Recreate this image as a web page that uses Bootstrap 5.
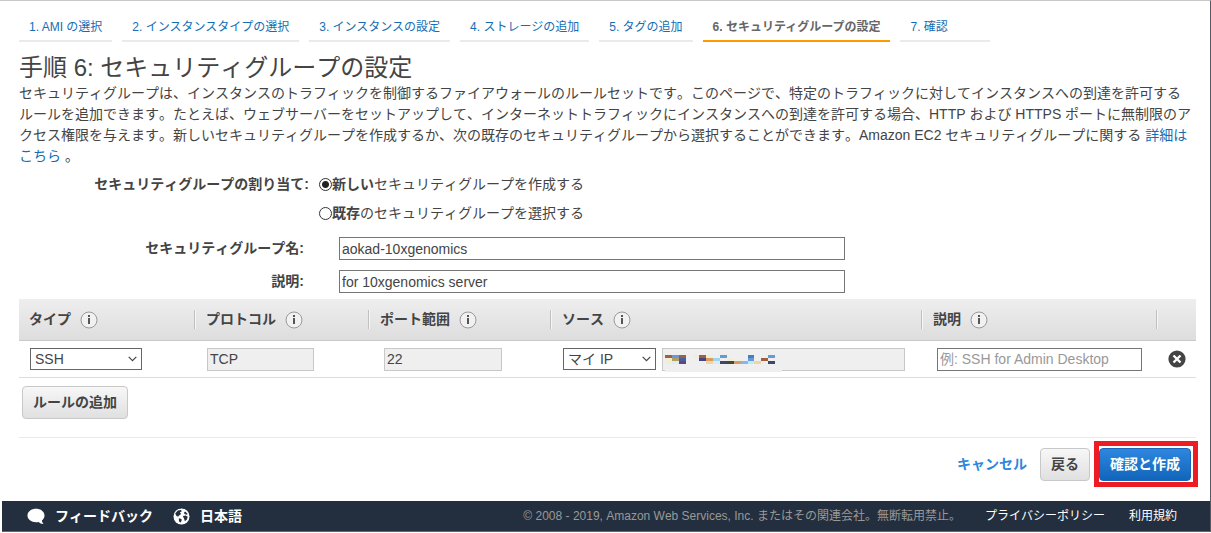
<!DOCTYPE html>
<html lang="ja">
<head>
<meta charset="utf-8">
<meta name="viewport" content="width=device-width, initial-scale=1">
<title>手順 6: セキュリティグループの設定</title>
<link href="https://cdn.jsdelivr.net/npm/bootstrap@5.3.0/dist/css/bootstrap.min.css" rel="stylesheet">
<style>
  body { font-family: "Liberation Sans", "Noto Sans CJK JP", sans-serif; font-size: 14px; line-height: 21px; font-kerning: none; color: #444; background: #fff; }
  a { color: #146eb4; text-decoration: none; }
  .console { border-top: 1px solid #c8c8c8; border-right: 1px solid #545b64; padding-left: 2px; }
  .console-main { padding: 17px 14px 20px 17px; }
  .wizard { gap: 10px; font-size: 12px; line-height: 18px; font-kerning: normal; }
  .wizard a { display: block; min-width: 90px; padding: 0 10px 4px; border-bottom: 2px solid #eaeaea; white-space: nowrap; }
  .wizard a.active { color: #666; font-weight: 700; border-color: #f90; }
  h1 { font-size: 24px; line-height: 28px; font-weight: 400; margin: 12px 0 1px; }
  .intro { margin: 0 4px 7px 0; line-break: strict; }
  .form-label-col { width: 290px; text-align: right; font-weight: 700; flex: none; }
  .form-label-col.inset { width: 285px; margin-right: 35px; }
  .assign { gap: 10px; }
  .assign-options { display: grid; gap: 8px; }
  .assign input { appearance: none; width: 13px; height: 13px; margin: 0; border: 1px solid #333; border-radius: 50%; background: #fff; flex: none; }
  .assign input:checked { background: radial-gradient(circle, #222 0 3px, #fff 4px); }
  .group-fields { gap: 10px; margin-top: 13px; }
  .field { height: 23px; padding: 0 2px; border: 1px solid #767676; background: #fff; color: #444; font-size: 14px; line-height: 21px; border-radius: 0; min-width: 0; }
  .field:disabled { background: #efefef; border-color: #c8c8c8; }
  .field::placeholder { color: #999; opacity: 1; }
  .field-wide { width: 506px; max-width: 100%; }
  .pick { appearance: none; height: 22px; padding: 0 20px 0 4px; border: 1px solid #666; border-radius: 0; color: #444; font-size: 14px; line-height: 20px;
    background: #fff url("data:image/svg+xml,%3Csvg xmlns='http://www.w3.org/2000/svg' width='9' height='6'%3E%3Cpath d='M.7.8 4.5 4.6 8.3.8' fill='none' stroke='%23444' stroke-width='1.2'/%3E%3C/svg%3E") no-repeat right 4px center; }
  .rules { table-layout: fixed; width: 100%; margin: 6px 0 8px; border-collapse: separate; border-spacing: 0; }
  .rules thead { background: linear-gradient(#eee, #ddd); }
  .rules th { height: 42px; padding: 0; border-bottom: 1px solid #c8c8c8; }
  .rules th > div { height: 19px; padding-left: 11px; border-left: 1px solid #c0c0c0; box-shadow: inset 1px 0 #f6f6f6; gap: 9px; }
  .rules th:first-child > div { padding-left: 10px; border-left: 0; box-shadow: none; }
  .rules td { height: 37px; padding: 0 0 0 13px; border-bottom: 1px solid #ddd; }
  .rules td:first-child { padding-left: 11px; }
  .rules td:last-child { padding-left: 12px; }
  .col-type { width: 175px; } .col-proto { width: 174px; } .col-port { width: 182px; } .col-desc { width: 235px; } .col-del { width: 40px; }
  .w-type { width: 112px; } .w-proto { width: 107px; } .w-port { width: 118px; } .w-source { width: 93px; } .w-desc { width: 205px; }
  .source-pair { gap: 6px; padding-right: 16px; }
  .indent { margin-left: 3px; }
  .mosaic { left: 3px; top: 1px; }
  .info { flex: none; }
  .ctl { height: 33px; padding: 0 10px; border: 1px solid #c8c8c8; border-radius: 4px; background: linear-gradient(#f7f7f7, #e0e0e0); color: #444; font-size: 14px; line-height: 31px; font-weight: 700; }
  .ctl-primary { border-color: #1a66b8; background: linear-gradient(#2e86de, #1166bb); color: #fff; }
  .actions { border-top: 1px solid #eaeaea; margin-top: 18px; padding: 10px 5px 0 0; }
  .actions a { color: #2e86de; font-weight: 700; margin-right: 13px; }
  .highlight { margin-left: 9px; }
  .highlight::after { content: ""; position: absolute; inset: -7px -7px -6px -5px; border: 5px solid #ed1c24; pointer-events: none; }
  .console-footer { min-height: 31px; padding: 0 33px 0 25px; background: #232f3e; border-bottom: 1px solid #666; color: #999; font-size: 12px; line-height: 18px; }
  .console-footer a { color: #fff; }
  .console-footer .tool { font-size: 14px; font-weight: 700; gap: 10px; }
</style>
</head>
<body>
<div class="console">
  <main class="console-main">
    <nav class="wizard d-flex flex-wrap" aria-label="ウィザード">
      <a href="#">1. AMI の選択</a>
      <a href="#">2. インスタンスタイプの選択</a>
      <a href="#">3. インスタンスの設定</a>
      <a href="#">4. ストレージの追加</a>
      <a href="#">5. タグの追加</a>
      <a href="#" class="active" aria-current="step">6. セキュリティグループの設定</a>
      <a href="#">7. 確認</a>
    </nav>
    <h1>手順 6: セキュリティグループの設定</h1>
    <p class="intro">セキュリティグループは、インスタンスのトラフィックを制御するファイアウォールのルールセットです。このページで、特定のトラフィックに対してインスタンスへの到達を許可するルールを追加できます。たとえば、ウェブサーバーをセットアップして、インターネットトラフィックにインスタンスへの到達を許可する場合、HTTP および HTTPS ポートに無制限のアクセス権限を与えます。新しいセキュリティグループを作成するか、次の既存のセキュリティグループから選択することができます。Amazon EC2 セキュリティグループに関する <a href="#">詳細はこちら</a> 。</p>

    <div class="assign d-flex" role="radiogroup" aria-labelledby="assign-label">
      <div class="form-label-col" id="assign-label">セキュリティグループの割り当て:</div>
      <div class="assign-options">
        <div class="d-flex align-items-center"><input type="radio" name="assign" id="assign-new" checked><label for="assign-new"><b>新しい</b>セキュリティグループを作成する</label></div>
        <div class="d-flex align-items-center"><input type="radio" name="assign" id="assign-old"><label for="assign-old"><b>既存</b>のセキュリティグループを選択する</label></div>
      </div>
    </div>
    <div class="group-fields d-grid">
      <div class="d-flex align-items-center">
        <label class="form-label-col inset" for="sg-name">セキュリティグループ名:</label>
        <input class="field field-wide" id="sg-name" type="text" value="aokad-10xgenomics">
      </div>
      <div class="d-flex align-items-center">
        <label class="form-label-col inset" for="sg-desc">説明:</label>
        <input class="field field-wide" id="sg-desc" type="text" value="for 10xgenomics server">
      </div>
    </div>

    <table class="rules">
      <colgroup><col class="col-type"><col class="col-proto"><col class="col-port"><col><col class="col-desc"><col class="col-del"></colgroup>
      <thead>
        <tr>
          <th scope="col"><div class="d-flex align-items-center">タイプ <svg class="info" width="18" height="18" viewBox="0 0 18 18"><use href="#i-info"/></svg></div></th>
          <th scope="col"><div class="d-flex align-items-center">プロトコル <svg class="info" width="18" height="18" viewBox="0 0 18 18"><use href="#i-info"/></svg></div></th>
          <th scope="col"><div class="d-flex align-items-center">ポート範囲 <svg class="info" width="18" height="18" viewBox="0 0 18 18"><use href="#i-info"/></svg></div></th>
          <th scope="col"><div class="d-flex align-items-center">ソース <svg class="info" width="18" height="18" viewBox="0 0 18 18"><use href="#i-info"/></svg></div></th>
          <th scope="col"><div class="d-flex align-items-center">説明 <svg class="info" width="18" height="18" viewBox="0 0 18 18"><use href="#i-info"/></svg></div></th>
          <th><div></div></th>
        </tr>
      </thead>
      <tbody>
        <tr>
          <td><select class="pick w-type" aria-label="タイプ"><option>SSH</option></select></td>
          <td><input class="field w-proto" type="text" value="TCP" disabled aria-label="プロトコル"></td>
          <td><input class="field w-port indent" type="text" value="22" disabled aria-label="ポート範囲"></td>
          <td>
            <div class="source-pair d-flex">
              <select class="pick w-source" aria-label="ソース"><option>マイ IP</option></select>
              <div class="position-relative d-flex flex-grow-1">
                <input class="field flex-grow-1" type="text" disabled aria-label="IP アドレス">
                <svg class="mosaic position-absolute" width="117" height="23" viewBox="0 0 117 23" shape-rendering="crispEdges" aria-hidden="true">
                  <path fill="#efefef" d="M0 0h117v23H0z"/>
                  <path fill="#a06040" d="M0 6h7v3H0zM14 6h7v3h-7zM34 6h7v3h-7zM96 9h7v3h-7z"/>
                  <path fill="#629bd8" d="M7 6h7v3H7zM55 6h7v3h-7zM103 6h7v3h-7zM83 9h6v3h-6z"/>
                  <path fill="#4280be" d="M83 6h6v3h-6z"/>
                  <path fill="#f0efd2" d="M0 9h7v6H0zM28 6h6v3h-6zM41 6h7v3h-7zM62 9h7v3h-7z"/>
                  <path fill="#b89c60" d="M7 9h7v3H7z"/>
                  <path fill="#4260a4" d="M14 9h7v3h-7z"/>
                  <path fill="#d7eff4" d="M7 12h7v3H7zM48 12h7v3h-7z"/>
                  <path fill="#644284" d="M14 12h7v3h-7z"/>
                  <path fill="#464284" d="M34 9h7v3h-7z"/>
                  <path fill="#d89c62" d="M41 9h7v3h-7zM69 12h7v3h-7z"/>
                  <path fill="#9cd4f4" d="M48 9h7v3h-7z"/>
                  <path fill="#f2d49c" d="M41 12h7v3h-7zM89 12h7v3h-7z"/>
                  <path fill="#424664" d="M55 12h7v3h-7zM103 12h7v3h-7z"/>
                  <path fill="#444642" d="M62 12h7v3h-7z"/>
                  <path fill="#82baf0" d="M76 12h7v3h-7z"/>
                  <path fill="#b8eff4" d="M83 12h6v3h-6z"/>
                </svg>
              </div>
            </div>
          </td>
          <td><input class="field w-desc indent" type="text" placeholder="例: SSH for Admin Desktop" aria-label="説明"></td>
          <td><button type="button" class="btn p-0 border-0 d-block" aria-label="ルールの削除"><svg class="d-block" width="18" height="18" viewBox="0 0 18 18"><circle cx="9" cy="9" r="8.6" fill="#444"/><path d="m5.5 5.5 7 7m0-7-7 7" stroke="#fff" stroke-width="2.4"/></svg></button></td>
        </tr>
      </tbody>
    </table>
    <button type="button" class="ctl indent d-block">ルールの追加</button>

    <div class="actions d-flex justify-content-end align-items-center">
      <a href="#">キャンセル</a>
      <button type="button" class="ctl">戻る</button>
      <div class="highlight position-relative d-flex"><button type="button" class="ctl ctl-primary">確認と作成</button></div>
    </div>
  </main>

  <footer class="console-footer d-flex align-items-center">
    <a href="#" class="tool d-flex align-items-center"><svg width="18" height="17" viewBox="0 0 18 17"><path fill="#fff" d="M9 .8c4.8 0 8.5 2.9 8.5 6.7 0 2.2-1 3.8-2.6 5 .1 1.4.7 2.4 1.7 3.4-2 .1-3.8-.7-5-2-.8.2-1.7.3-2.6.3C4.2 14.2.5 11.3.5 7.5S4.2.8 9 .8z"/></svg>フィードバック</a>
    <a href="#" class="tool d-flex align-items-center ms-3 ps-1"><svg width="17" height="17" viewBox="0 0 17 17"><circle cx="8.5" cy="8.5" r="8" fill="#fff"/><path fill="#232f3e" d="M2.2 5.4 4.8 2.4 8 1.9l.8 1.3-1.9 1.2 1.3 1.6-2.2 1.5-.9 1.2-1.8-1zM12 3.6l2.4 2-.2 1.2-2.2-.6-1.2-1.2zM9.8 8l2.9-.6 2 1.3-.8 2.7-2 1.8-.9-2.6zM5.8 10.2l2.7.9.2 1.4-1.3 2.2-1.4-1.5z"/></svg>日本語</a>
    <span class="ms-auto">© 2008 - 2019, Amazon Web Services, Inc. またはその関連会社。無断転用禁止。</span>
    <a href="#" class="ms-4">プライバシーポリシー</a>
    <a href="#" class="ms-4">利用規約</a>
  </footer>
</div>
<svg class="d-none"><symbol id="i-info" viewBox="0 0 18 18"><circle cx="9" cy="9" r="8" fill="#f1f1f1" stroke="#999"/><path fill="#555" d="M8 4h2v2H8zM8 7h2v6H8z"/></symbol></svg>
<script src="https://cdn.jsdelivr.net/npm/bootstrap@5.3.0/dist/js/bootstrap.bundle.min.js"></script>
</body>
</html>
